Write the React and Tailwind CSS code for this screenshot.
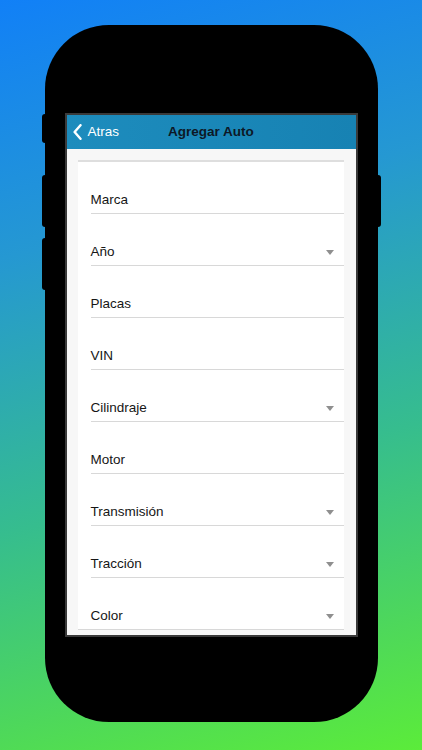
const fields = [
  { label: 'Marca' },
  { label: 'Año', select: true },
  { label: 'Placas' },
  { label: 'VIN' },
  { label: 'Cilindraje', select: true },
  { label: 'Motor' },
  { label: 'Transmisión', select: true },
  { label: 'Tracción', select: true },
  { label: 'Color', select: true, last: true },
]

function Field({ label, select, last }) {
  return (
    <div
      className={
        'h-[52px] flex items-end justify-between pb-[5px] pr-[10px] border-b border-[#d8d8d8] ' +
        (last ? 'pl-[13px]' : 'ml-[13px]')
      }
    >
      <span className="text-[13.5px] leading-4 text-[#161616]">{label}</span>
      {select && (
        <span className="mb-[5px] w-0 h-0 border-l-[4px] border-r-[4px] border-t-[5px] border-l-transparent border-r-transparent border-t-[#8f8f8f]" />
      )}
    </div>
  )
}

export default function App() {
  return (
    <div
      className="w-full h-[750px] overflow-hidden bg-[linear-gradient(165deg,#1180f7_0%,#2598d2_30%,#36bd8e_62%,#4ed85a_85%,#5bec3a_100%)] pt-[25px]"
      style={{ fontFamily: '"Liberation Sans", Arial, sans-serif' }}
    >
      <div className="relative mx-auto w-[333px] h-[697px] bg-black rounded-[64px] px-5 pt-[88px]">
        {/* side buttons */}
        <div className="absolute -left-[3px] top-[89px] w-[3px] h-[29px] bg-black rounded-l-sm" />
        <div className="absolute -left-[3px] top-[150px] w-[3px] h-[52px] bg-black rounded-l-sm" />
        <div className="absolute -left-[3px] top-[213px] w-[3px] h-[52px] bg-black rounded-l-sm" />
        <div className="absolute -right-[3px] top-[150px] w-[3px] h-[52px] bg-black rounded-r-sm" />

        <div className="w-[293px] h-[524px] border-2 border-[#3a3a3a] bg-[#f7f7f7] overflow-hidden flex flex-col">
          <div className="h-[34px] shrink-0 bg-[linear-gradient(90deg,#1d8cbd,#1782b3)] flex items-center relative">
            <div className="absolute left-[6px] top-0 h-full flex items-center gap-[6px] text-white">
              <svg width="9" height="16" viewBox="0 0 9 16" fill="none">
                <path d="M7.5 1.2 1.6 8l5.9 6.8" stroke="white" strokeWidth="2.4" strokeLinecap="round" strokeLinejoin="round" />
              </svg>
              <span className="text-[13.5px] leading-4">Atras</span>
            </div>
            <div className="flex-1 text-center text-[13.5px] leading-4 font-bold text-[#0d1826]">Agregar Auto</div>
          </div>

          <div className="mt-[11px] ml-[11px] mr-[12px] bg-white border-t-2 border-[#dedede]">
            {fields.map((f) => (
              <Field key={f.label} {...f} />
            ))}
          </div>
        </div>
      </div>
    </div>
  )
}
